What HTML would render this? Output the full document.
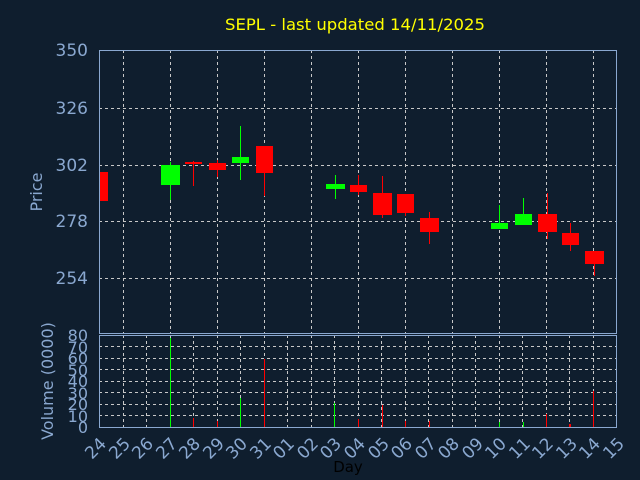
<!DOCTYPE html>
<html><head><style>
html,body{margin:0;padding:0;background:#0f1e2e;}
svg{display:block;font-family:"DejaVu Sans","Liberation Sans",sans-serif;}
</style></head><body>
<svg width="640" height="480" viewBox="0 0 640 480" xmlns="http://www.w3.org/2000/svg">
<rect width="640" height="480" fill="#0f1e2e"/>
<text x="355" y="30" fill="#ffff00" font-size="16" text-anchor="middle" textLength="260" lengthAdjust="spacingAndGlyphs">SEPL - last updated 14/11/2025</text>
<g stroke="#c8c8c8" stroke-dasharray="3,3" stroke-width="1">
<line x1="99" y1="108.5" x2="617" y2="108.5"/><line x1="99" y1="165.5" x2="617" y2="165.5"/><line x1="99" y1="221.5" x2="617" y2="221.5"/><line x1="99" y1="278.5" x2="617" y2="278.5"/>
<line x1="123.5" y1="50" x2="123.5" y2="333"/><line x1="170.5" y1="50" x2="170.5" y2="333"/><line x1="217.5" y1="50" x2="217.5" y2="333"/><line x1="264.5" y1="50" x2="264.5" y2="333"/><line x1="311.5" y1="50" x2="311.5" y2="333"/><line x1="358.5" y1="50" x2="358.5" y2="333"/><line x1="405.5" y1="50" x2="405.5" y2="333"/><line x1="452.5" y1="50" x2="452.5" y2="333"/><line x1="499.5" y1="50" x2="499.5" y2="333"/><line x1="546.5" y1="50" x2="546.5" y2="333"/><line x1="593.5" y1="50" x2="593.5" y2="333"/>
<line x1="99" y1="346.5" x2="617" y2="346.5"/><line x1="99" y1="358.5" x2="617" y2="358.5"/><line x1="99" y1="369.5" x2="617" y2="369.5"/><line x1="99" y1="381.5" x2="617" y2="381.5"/><line x1="99" y1="392.5" x2="617" y2="392.5"/><line x1="99" y1="404.5" x2="617" y2="404.5"/><line x1="99" y1="415.5" x2="617" y2="415.5"/>
<line x1="123.5" y1="335" x2="123.5" y2="427"/><line x1="146.5" y1="335" x2="146.5" y2="427"/><line x1="170.5" y1="335" x2="170.5" y2="427"/><line x1="193.5" y1="335" x2="193.5" y2="427"/><line x1="217.5" y1="335" x2="217.5" y2="427"/><line x1="240.5" y1="335" x2="240.5" y2="427"/><line x1="264.5" y1="335" x2="264.5" y2="427"/><line x1="287.5" y1="335" x2="287.5" y2="427"/><line x1="311.5" y1="335" x2="311.5" y2="427"/><line x1="334.5" y1="335" x2="334.5" y2="427"/><line x1="358.5" y1="335" x2="358.5" y2="427"/><line x1="381.5" y1="335" x2="381.5" y2="427"/><line x1="405.5" y1="335" x2="405.5" y2="427"/><line x1="428.5" y1="335" x2="428.5" y2="427"/><line x1="452.5" y1="335" x2="452.5" y2="427"/><line x1="475.5" y1="335" x2="475.5" y2="427"/><line x1="499.5" y1="335" x2="499.5" y2="427"/><line x1="522.5" y1="335" x2="522.5" y2="427"/><line x1="546.5" y1="335" x2="546.5" y2="427"/><line x1="569.5" y1="335" x2="569.5" y2="427"/><line x1="593.5" y1="335" x2="593.5" y2="427"/>
</g>
<g stroke-width="1">
<rect x="99" y="172" width="9" height="29" fill="#ff0000"/>
<line x1="170.5" y1="162" x2="170.5" y2="200" stroke="#00ff00"/><rect x="161" y="165" width="19" height="20" fill="#00ff00"/>
<line x1="193.5" y1="161" x2="193.5" y2="186" stroke="#ff0000"/><rect x="185" y="162" width="17" height="2" fill="#ff0000"/>
<line x1="217.5" y1="160" x2="217.5" y2="177" stroke="#ff0000"/><rect x="209" y="163" width="17" height="7" fill="#ff0000"/>
<line x1="240.5" y1="126" x2="240.5" y2="180" stroke="#00ff00"/><rect x="232" y="157" width="17" height="6" fill="#00ff00"/>
<line x1="264.5" y1="146" x2="264.5" y2="196" stroke="#ff0000"/><rect x="256" y="146" width="17" height="27" fill="#ff0000"/>
<line x1="335.5" y1="175" x2="335.5" y2="199" stroke="#00ff00"/><rect x="326" y="184" width="19" height="5" fill="#00ff00"/>
<line x1="358.5" y1="175" x2="358.5" y2="195" stroke="#ff0000"/><rect x="350" y="185" width="17" height="7" fill="#ff0000"/>
<line x1="382.5" y1="176" x2="382.5" y2="218" stroke="#ff0000"/><rect x="373" y="193" width="19" height="22" fill="#ff0000"/>
<line x1="405.5" y1="194" x2="405.5" y2="216" stroke="#ff0000"/><rect x="397" y="194" width="17" height="19" fill="#ff0000"/>
<line x1="429.5" y1="212" x2="429.5" y2="244" stroke="#ff0000"/><rect x="420" y="218" width="19" height="14" fill="#ff0000"/>
<line x1="499.5" y1="205" x2="499.5" y2="229" stroke="#00ff00"/><rect x="491" y="223" width="17" height="6" fill="#00ff00"/>
<line x1="523.5" y1="198" x2="523.5" y2="225" stroke="#00ff00"/><rect x="515" y="214" width="17" height="11" fill="#00ff00"/>
<line x1="547.5" y1="193" x2="547.5" y2="239" stroke="#ff0000"/><rect x="538" y="214" width="19" height="18" fill="#ff0000"/>
<line x1="570.5" y1="223" x2="570.5" y2="251" stroke="#ff0000"/><rect x="562" y="233" width="17" height="12" fill="#ff0000"/>
<line x1="594.5" y1="251" x2="594.5" y2="276" stroke="#ff0000"/><rect x="585" y="251" width="19" height="13" fill="#ff0000"/>
</g>
<g stroke-width="1">
<line x1="170.5" y1="338" x2="170.5" y2="427" stroke="#00ff00"/>
<line x1="193.5" y1="418" x2="193.5" y2="427" stroke="#ff0000"/>
<line x1="217.5" y1="421" x2="217.5" y2="427" stroke="#ff0000"/>
<line x1="240.5" y1="398" x2="240.5" y2="427" stroke="#00ff00"/>
<line x1="264.5" y1="359" x2="264.5" y2="427" stroke="#ff0000"/>
<line x1="334.5" y1="403" x2="334.5" y2="427" stroke="#00ff00"/>
<line x1="358.5" y1="419" x2="358.5" y2="427" stroke="#ff0000"/>
<line x1="382.5" y1="405" x2="382.5" y2="427" stroke="#ff0000"/>
<line x1="405.5" y1="421" x2="405.5" y2="427" stroke="#ff0000"/>
<line x1="429.5" y1="421" x2="429.5" y2="427" stroke="#ff0000"/>
<line x1="499.5" y1="422" x2="499.5" y2="427" stroke="#00ff00"/>
<line x1="523.5" y1="422" x2="523.5" y2="427" stroke="#00ff00"/>
<line x1="546.5" y1="414" x2="546.5" y2="427" stroke="#ff0000"/>
<rect x="569" y="424" width="2" height="3" fill="#ff0000"/>
<line x1="593.5" y1="391" x2="593.5" y2="427" stroke="#ff0000"/>
</g>
<g stroke="#8aa8d0" stroke-width="1" fill="none">
<rect x="99.5" y="50.5" width="517" height="283"/>
<rect x="99.5" y="335.5" width="517" height="92"/>
</g>
<g fill="#8aa8d0" font-size="17" text-anchor="end">
<text x="88" y="56">350</text><text x="88" y="114">326</text><text x="88" y="171">302</text><text x="88" y="227">278</text><text x="88" y="284">254</text>
</g>
<text transform="translate(42,192) rotate(-90)" fill="#8aa8d0" font-size="16" text-anchor="middle">Price</text>
<text transform="translate(53,381) rotate(-90)" fill="#8aa8d0" font-size="16" text-anchor="middle">Volume (0000)</text>
<g fill="#8aa8d0" font-size="16" text-anchor="end">
<text x="88" y="341">80</text><text x="88" y="353">70</text><text x="88" y="364">60</text><text x="88" y="376">50</text><text x="88" y="387">40</text><text x="88" y="399">30</text><text x="88" y="410">20</text><text x="88" y="422">10</text><text x="88" y="433">0</text>
</g>
<g fill="#8aa8d0" font-size="17">
<text transform="translate(92,460) rotate(-45)">24</text>
<text transform="translate(116,460) rotate(-45)">25</text>
<text transform="translate(139,460) rotate(-45)">26</text>
<text transform="translate(163,460) rotate(-45)">27</text>
<text transform="translate(186,460) rotate(-45)">28</text>
<text transform="translate(210,460) rotate(-45)">29</text>
<text transform="translate(233,460) rotate(-45)">30</text>
<text transform="translate(257,460) rotate(-45)">31</text>
<text transform="translate(280,460) rotate(-45)">01</text>
<text transform="translate(304,460) rotate(-45)">02</text>
<text transform="translate(327,460) rotate(-45)">03</text>
<text transform="translate(351,460) rotate(-45)">04</text>
<text transform="translate(375,460) rotate(-45)">05</text>
<text transform="translate(398,460) rotate(-45)">06</text>
<text transform="translate(422,460) rotate(-45)">07</text>
<text transform="translate(445,460) rotate(-45)">08</text>
<text transform="translate(469,460) rotate(-45)">09</text>
<text transform="translate(492,460) rotate(-45)">10</text>
<text transform="translate(516,460) rotate(-45)">11</text>
<text transform="translate(539,460) rotate(-45)">12</text>
<text transform="translate(563,460) rotate(-45)">13</text>
<text transform="translate(586,460) rotate(-45)">14</text>
<text transform="translate(610,460) rotate(-45)">15</text>
</g>
<text x="348" y="472" fill="#000000" font-size="15" text-anchor="middle">Day</text>
</svg>
</body></html>
